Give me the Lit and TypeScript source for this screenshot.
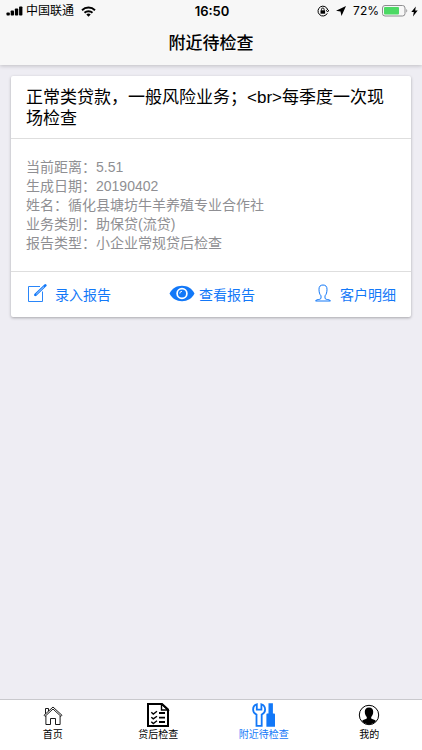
import { LitElement, html, css, svg } from "lit";
import { customElement, property, state } from "lit/decorators.js";
import { classMap } from "lit/directives/class-map.js";

const icons = {
  edit: html`<svg width="20" height="20" viewBox="0 0 20 20" fill="none" stroke="currentColor">
    <path d="M13 2.500H1.500v15h14V7.500" stroke-width=".9" />
    <path d="M8.500 10.800L18.300 1.400" stroke-width="2.600" stroke-linecap="round" />
    <path d="M9.200 10.200L17 2.700" stroke="#fff" stroke-width=".7" />
    <path d="M7.300 12l.8-2 1.300 1.300z" fill="currentColor" stroke="none" />
  </svg>`,
  eye: html`<svg width="26" height="18" viewBox="0 0 26 18">
    <path d="M.5 8.500C3 3.500 7.500.8 13 .8S23 3.500 25.500 8.500C23 13.500 18.500 16.200 13 16.200S3 13.500.5 8.500z" fill="currentColor" />
    <circle cx="13" cy="8.500" r="4.900" fill="none" stroke="#fff" stroke-width="1.700" />
    <path d="M10.800 8.500a2.200 2.200 0 0 1 2.200-2.200" fill="none" stroke="#fff" stroke-width=".9" />
  </svg>`,
  person: html`<svg width="18" height="20" viewBox="0 0 18 20" fill="none" stroke="currentColor">
    <path d="M7 11.800C5.600 10.500 5 8 5 5.200 5 2.500 6.400 1 9 1s4 1.500 4 4.200c0 2.800-.6 5.300-2 6.600v2.200c0 .7.500 1.100 1.300 1.300 2 .4 3.700.5 4.200 1.700H1.500c.5-1.200 2.200-1.300 4.200-1.700.8-.2 1.300-.6 1.300-1.300z" />
  </svg>`,
  home: html`<svg width="20" height="24" viewBox="0 0 20 24" fill="none" stroke="currentColor" stroke-width=".9">
    <path d="M1 12.300L10 4l9 8.300-1 1.100L10 6l-8 7.400z" />
    <path d="M2.500 10.800V5.500h3v2.500M2.900 13v8.500h4.600v-6h5v6h4.600V13" />
  </svg>`,
  checklist: html`<svg width="24" height="24" viewBox="0 0 24 24" fill="none" stroke="currentColor">
    <path d="M16 1H2v22h20V6.500z" stroke-width="2" />
    <path d="M15.500 1v6H22z" stroke-width="1.400" />
    <path d="M5.300 9.300l2 1.700L11 8.300M5.300 14.200l2 1.700 3.700-2.700M5.300 18.800l2 1.700 3.700-2.700" stroke-width="1.400" />
    <path d="M13 10h6M13 14.600h6M13 19h6" stroke-width="1.900" />
  </svg>`,
  tools: html`<svg width="24" height="24" viewBox="0 0 24 24">
    <path d="M4.800 1.300C2.500 2 1.100 4 1.100 6.500c0 2.200 1.200 4 3.400 5v11.300h5.200V11.500c2.200-1 3.400-2.800 3.400-5 0-2.500-1.400-4.500-3.700-5.200V6.600H4.800z" fill="none" stroke="currentColor" stroke-width="1.800" />
    <path d="M16.500.3h4.400v10.300h1.300c.5 0 .8.300.8.800V23.700h-8.600V11.400c0-.5.300-.8.800-.8h1.300z" fill="currentColor" />
  </svg>`,
  profile: html`<svg width="22" height="24" viewBox="0 0 22 24">
    <circle cx="11" cy="12" r="9.700" fill="none" stroke="currentColor" stroke-width="1" />
    <path d="M11 4.500c2.900 0 4.200 1.600 4.200 4.300 0 2.300-.8 4.200-2 5.300v1.300c1 .9 3.500 1 4.800 2.500A9 9 0 0 1 11 21.200a9 9 0 0 1-7-3.300c1.300-1.500 3.800-1.600 4.800-2.500v-1.300c-1.200-1.100-2-3-2-5.300 0-2.700 1.300-4.300 4.200-4.300z" fill="currentColor" />
  </svg>`,
};

type IconName = keyof typeof icons;

@customElement("status-bar")
class StatusBar extends LitElement {
  static styles = css`
    :host {
      display: grid;
      grid-template-columns: 1fr auto 1fr;
      align-items: center;
      height: 22px;
      padding: 0 4px 0 6px;
      font-size: 12px;
      line-height: 16px;
      color: #000;
    }
    .side {
      display: flex;
      align-items: center;
      gap: 3px;
    }
    .end {
      justify-content: flex-end;
      gap: 5px;
    }
    .wifi {
      margin-left: 4px;
    }
    .time {
      font: 600 13px/16px Inter, "Liberation Sans", sans-serif;
    }
    .charge {
      display: flex;
      align-items: center;
      gap: 3px;
      font: 12px/16px Inter, "Liberation Sans", sans-serif;
    }
    svg {
      display: block;
      flex: none;
    }
  `;

  render() {
    return html`
      <div class="side">
        <svg width="17" height="10" viewBox="0 0 17 10">
          ${[3, 5, 7, 9].map(
            (h, i) => svg`<rect x=${0.5 + i * 4.200} y=${9.500 - h} width="3.300" height=${h} rx=".8" />`
          )}
        </svg>
        <span>中国联通</span>
        <svg class="wifi" width="15" height="11" viewBox="0 0 15 11" fill="none" stroke="#000" stroke-width="1.900">
          <path d="M1 4.200a9.300 9.300 0 0 1 13 0M3.500 6.800a5.800 5.800 0 0 1 8 0" />
          <path d="M7.500 10.800L5.300 8.600a3.200 3.200 0 0 1 4.400 0z" fill="#000" stroke="none" />
        </svg>
      </div>
      <span class="time">16:50</span>
      <div class="side end">
        <svg width="12" height="12" viewBox="0 0 12 12" fill="none" stroke="#000">
          <path d="M10.300 8.300A4.900 4.900 0 1 1 10.700 5M9 5.300l1.800 1.500L12 4.800" />
          <rect x="3.500" y="5.300" width="4.600" height="3.400" fill="#000" stroke="none" />
          <path d="M4.500 5.500V4.300a1.300 1.300 0 0 1 2.600 0v1.200" stroke-width=".9" />
        </svg>
        <svg width="14" height="12" viewBox="0 0 14 12"><path d="M12 1L7.500 11 6.500 6.500 2 5.700z" /></svg>
        <div class="charge">
          <span>72%</span>
          <svg width="26" height="12" viewBox="0 0 26 12">
            <rect x=".5" y=".5" width="22.500" height="10.500" rx="2.500" fill="none" stroke="#8d8d8f" />
            <rect x="2" y="2" width="15" height="7.500" rx="1" fill="#4cd964" />
            <path d="M24.300 4v3.600c1.300-.6 1.300-3 0-3.600z" fill="#8d8d8f" />
          </svg>
          <svg width="7" height="11" viewBox="0 0 7 11"><path d="M4.800.5L.3 6h2.500L2 10.500 6.700 4.600H4.200z" /></svg>
        </div>
      </div>
    `;
  }
}

@customElement("loan-card")
class LoanCard extends LitElement {
  @property() heading = "";
  @property({ attribute: false }) fields: [string, string][] = [];

  static styles = css`
    :host {
      display: block;
      background: #fff;
      border-radius: 2px;
      box-shadow: 0 1px 3px rgba(0, 0, 0, 0.3);
    }
    .heading {
      margin: 0;
      padding: 11px 15px 9px;
      border-bottom: 1px solid #dedede;
      font-size: 17px;
      font-weight: 400;
      line-height: 21px;
      color: #000;
    }
    .fields {
      margin: 0;
      padding: 19px 15px 18px;
      border-bottom: 1px solid #dedede;
      font-size: 14px;
      line-height: 19px;
      color: #8f8f93;
    }
    .field {
      display: flex;
    }
    dt,
    dd {
      margin: 0;
    }
    .actions {
      display: flex;
      justify-content: space-between;
      padding: 0 15px;
    }
    .action {
      display: flex;
      align-items: center;
      gap: 8px;
      height: 44px;
      margin-bottom: 1px;
      padding: 0 0 0 1px;
      border: 0;
      background: none;
      color: #1278f8;
      font: inherit;
      font-size: 14px;
      cursor: pointer;
    }
    .action svg {
      display: block;
    }
    .eye {
      gap: 4px;
      padding: 0;
    }
  `;

  private action(icon: IconName, label: string) {
    return html`<button type="button" class="action ${icon}">${icons[icon]}<span>${label}</span></button>`;
  }

  render() {
    return html`
      <h2 class="heading">${this.heading}</h2>
      <dl class="fields">
        ${this.fields.map(([k, v]) => html`<div class="field"><dt>${k}：</dt><dd>${v}</dd></div>`)}
      </dl>
      <div class="actions">
        ${this.action("edit", "录入报告")} ${this.action("eye", "查看报告")} ${this.action("person", "客户明细")}
      </div>
    `;
  }
}

@customElement("tab-bar")
class TabBar extends LitElement {
  @state() private active: IconName = "tools";

  private tabs: [IconName, string][] = [
    ["home", "首页"],
    ["checklist", "贷后检查"],
    ["tools", "附近待检查"],
    ["profile", "我的"],
  ];

  static styles = css`
    :host {
      display: block;
      border-top: 1px solid #c9c9cd;
      background: #fff;
    }
    .tabs {
      display: grid;
      grid-template-columns: repeat(4, 1fr);
    }
    .tab {
      display: flex;
      flex-direction: column;
      align-items: center;
      height: 50px;
      padding: 3px 0 0;
      border: 0;
      background: none;
      color: #000;
      font: inherit;
      font-size: 10px;
      line-height: 16px;
      cursor: pointer;
    }
    .tab svg {
      display: block;
    }
    .active {
      color: #1278f8;
    }
  `;

  render() {
    return html`<nav class="tabs">
      ${this.tabs.map(
        ([icon, label]) => html`<button
          type="button"
          class=${classMap({ tab: true, active: icon === this.active })}
          @click=${() => (this.active = icon)}
        >
          ${icons[icon]}<span>${label}</span>
        </button>`
      )}
    </nav>`;
  }
}

@customElement("app-root")
class AppRoot extends LitElement {
  static styles = css`
    :host {
      display: flex;
      flex-direction: column;
      min-height: 100vh;
      background: #eeedf3;
      font-family: "Liberation Sans", "Noto Sans CJK SC", sans-serif;
    }
    .top {
      background: #f7f7f7;
      box-shadow: 0 1px 4px rgba(0, 0, 0, 0.2);
    }
    .title {
      margin: 0;
      font-size: 17px;
      font-weight: 500;
      line-height: 43px;
      text-align: center;
      color: #000;
    }
    .content {
      flex: 1;
      padding: 11px;
    }
  `;

  private fields: [string, string][] = [
    ["当前距离", "5.51"],
    ["生成日期", "20190402"],
    ["姓名", "循化县塘坊牛羊养殖专业合作社"],
    ["业务类别", "助保贷(流贷)"],
    ["报告类型", "小企业常规贷后检查"],
  ];

  render() {
    return html`
      <header class="top">
        <status-bar></status-bar>
        <h1 class="title">附近待检查</h1>
      </header>
      <main class="content">
        <loan-card
          heading="正常类贷款，一般风险业务；&lt;br&gt;每季度一次现场检查"
          .fields=${this.fields}
        ></loan-card>
      </main>
      <tab-bar></tab-bar>
    `;
  }
}
